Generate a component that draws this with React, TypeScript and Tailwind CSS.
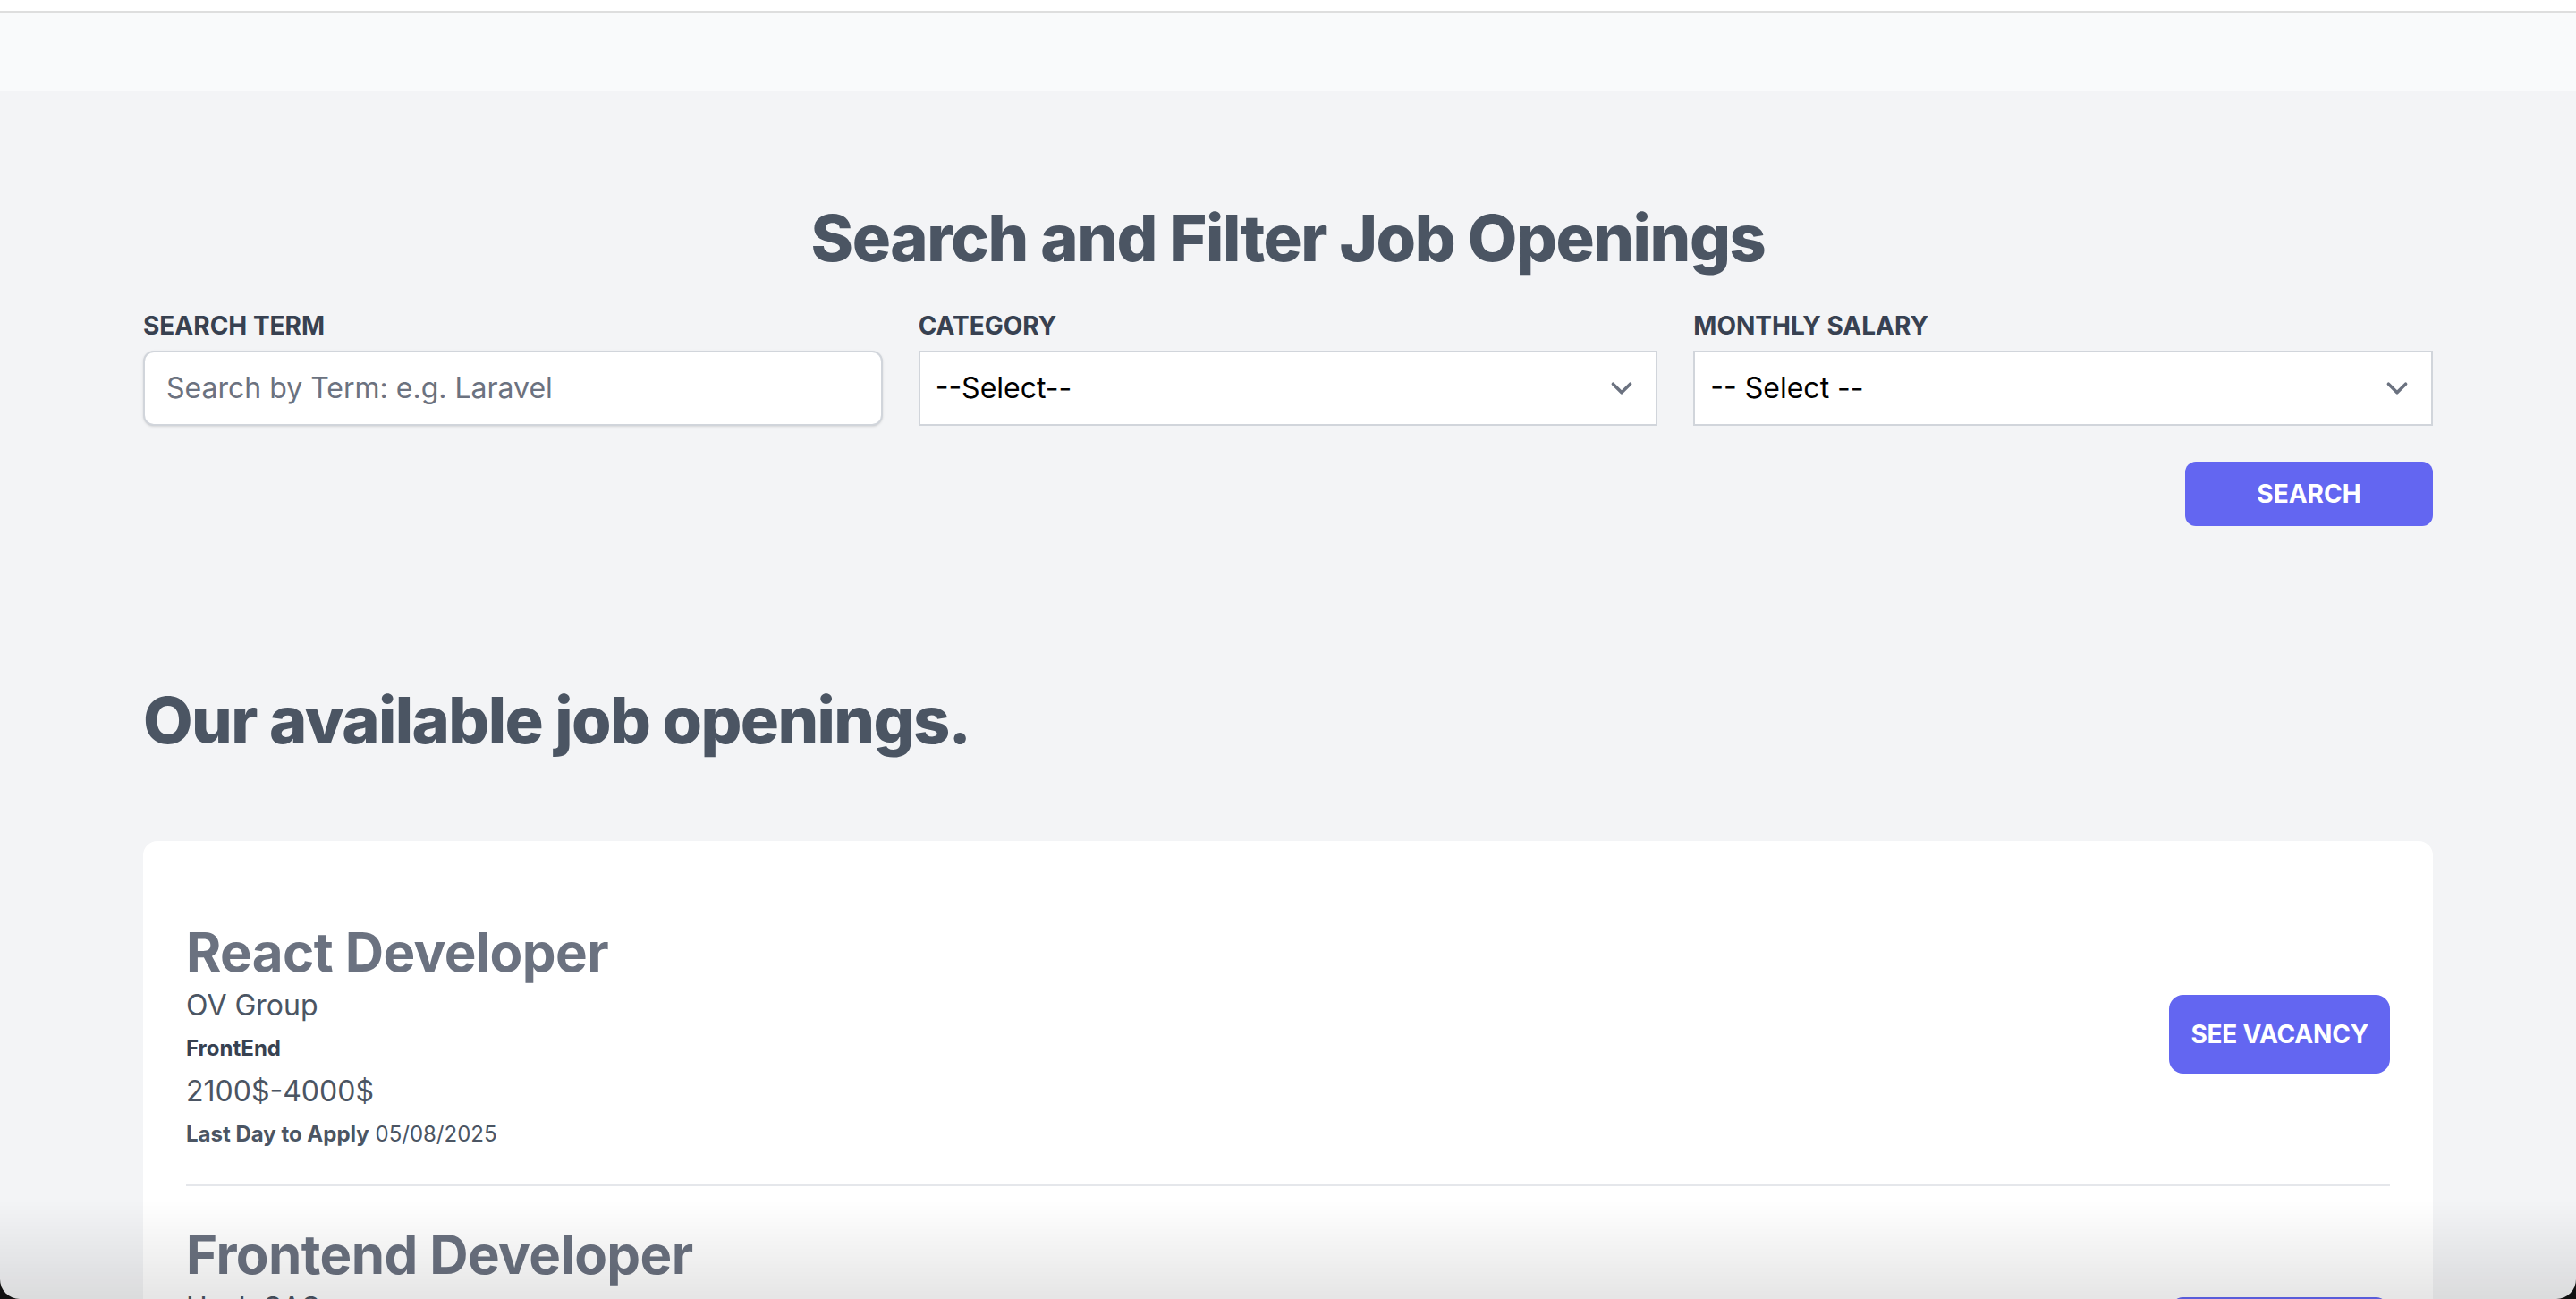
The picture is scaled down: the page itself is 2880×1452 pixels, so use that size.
import { useState } from "react";

type Job = {
  title: string;
  company: string;
  category: string;
  salary: string;
  lastDay: string;
};

const jobs: Job[] = [
  {
    title: "React Developer",
    company: "OV Group",
    category: "FrontEnd",
    salary: "2100$-4000$",
    lastDay: "05/08/2025",
  },
  {
    title: "Frontend Developer",
    company: "Hash SAS",
    category: "FrontEnd",
    salary: "1500$-2000$",
    lastDay: "12/08/2025",
  },
];

function Chevron() {
  return (
    <svg
      className="pointer-events-none absolute right-[16px] top-1/2 -translate-y-1/2"
      width="48"
      height="48"
      viewBox="0 0 20 20"
      fill="none"
    >
      <path
        d="M6 8l4 4 4-4"
        stroke="#6b7280"
        strokeWidth="1.5"
        strokeLinecap="round"
        strokeLinejoin="round"
      />
    </svg>
  );
}

function FilterSelect({ label, options }: { label: string; options: string[] }) {
  const [value, setValue] = useState(options[0]);
  return (
    <div>
      <label className="mb-2 block text-[28px] leading-[40px] font-bold uppercase text-[#374151]">
        {label}
      </label>
      <div className="relative">
        <select
          value={value}
          onChange={(e) => setValue(e.target.value)}
          className="block w-full appearance-none border-2 border-[#d1d5db] bg-white py-4 pl-[17px] pr-20 text-[32px] leading-[48px] text-black outline-none"
        >
          {options.map((o) => (
            <option key={o}>{o}</option>
          ))}
        </select>
        <Chevron />
      </div>
    </div>
  );
}

function JobItem({ job }: { job: Job }) {
  return (
    <div className="flex items-center justify-between border-b-2 border-[#e5e7eb] py-10">
      <div>
        <h3 className="text-[60px] leading-[72px] font-bold tracking-[-0.6px] text-[#6b7280]">
          {job.title}
        </h3>
        <p className="text-[32px] leading-[48px] text-[#4b5563]">{job.company}</p>
        <p className="mt-2 text-[24px] leading-[32px] font-bold text-[#374151]">
          {job.category}
        </p>
        <p className="mt-2 text-[32px] leading-[48px] text-[#4b5563]">{job.salary}</p>
        <p className="mt-2 text-[24px] leading-[32px] text-[#4b5563]">
          <span className="font-bold">Last Day to Apply</span> {job.lastDay}
        </p>
      </div>
      <a
        href="#"
        className="rounded-2xl bg-[#6366f1] px-6 py-6 text-[28px] leading-[40px] font-bold uppercase tracking-[-0.2px] text-white"
      >
        See Vacancy
      </a>
    </div>
  );
}

export default function App() {
  return (
    <div className="min-h-screen bg-[#f3f4f6] font-['Inter',sans-serif]">
      <div className="h-[14px] border-b-2 border-[#dedede] bg-white" />
      <div className="h-[88px] bg-[#f9fafb]" />

      <main className="mx-auto max-w-[2560px] pt-[124px] pb-20">
        <h2 className="mb-[38px] text-center text-[72px] leading-[80px] font-extrabold tracking-[-1.4px] text-[#4b5563]">
          Search and Filter Job Openings
        </h2>

        <form className="flex flex-col" onSubmit={(e) => e.preventDefault()}>
          <div className="grid grid-cols-3 gap-10">
            <div>
              <label className="mb-2 block text-[28px] leading-[40px] font-bold uppercase text-[#374151]">
                Search Term
              </label>
              <input
                type="text"
                placeholder="Search by Term: e.g. Laravel"
                className="block w-full rounded-xl border-2 border-[#d1d5db] bg-white px-6 py-4 text-[32px] leading-[48px] text-[#374151] shadow-sm outline-none placeholder:text-[#6b7280]"
              />
            </div>
            <FilterSelect label="Category" options={["--Select--", "FrontEnd", "BackEnd", "DevOps"]} />
            <FilterSelect
              label="Monthly Salary"
              options={["-- Select --", "0$ - 499$", "500$ - 999$", "1000$ - 1999$", "2000$ - 4000$"]}
            />
          </div>
          <div className="mt-[40px] flex justify-end">
            <button
              type="submit"
              className="w-[277px] rounded-xl bg-[#6366f1] py-4 text-[28px] leading-[40px] font-bold uppercase text-white"
            >
              Search
            </button>
          </div>
        </form>

        <h2 className="mt-[177px] text-[72px] leading-[80px] font-extrabold tracking-[-1.6px] text-[#4b5563]">
          Our available job openings.
        </h2>

        <div className="mt-[95px] rounded-2xl bg-white px-12 pt-12 pb-12">
          {jobs.map((job) => (
            <JobItem key={job.title} job={job} />
          ))}
        </div>
      </main>

      <div className="pointer-events-none fixed inset-x-0 bottom-0 h-[110px] bg-linear-to-b from-transparent to-black/10" />
      <div className="pointer-events-none fixed inset-0 overflow-hidden">
        <div className="absolute inset-0 rounded-b-[22px] shadow-[0_0_0_60px_#111]" />
      </div>
    </div>
  );
}
